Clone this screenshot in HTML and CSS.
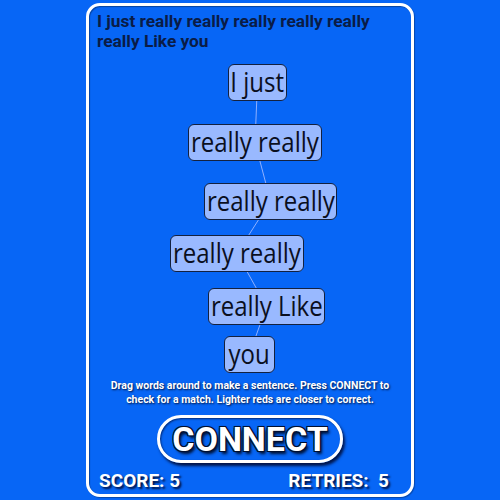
FILE: index.html
```html
<!DOCTYPE html>
<html>
<head>
<meta charset="utf-8">
<link rel="stylesheet" href="styles.css">
</head>
<body>
<div class="card">
  <div class="title">I just really really really really really really Like you</div>
  <div class="canvas">
    <svg class="links" width="322" height="325" viewBox="0 0 322 325">
      <polyline points="168.5,30.5 166,90.5 181.5,149 148,201.5 177.5,254.5 160.5,302" fill="none" stroke="#8fb0ff" stroke-width="1"/>
    </svg>
    <div class="word" style="left:139px;top:12px;width:59px"><span>I just</span></div>
    <div class="word" style="left:99px;top:72px;width:134px"><span>really really</span></div>
    <div class="word" style="left:115px;top:131px;width:133px"><span>really really</span></div>
    <div class="word" style="left:81px;top:183px;width:134px"><span>really really</span></div>
    <div class="word" style="left:119px;top:236px;width:117px"><span>really Like</span></div>
    <div class="word" style="left:135px;top:284px;width:51px"><span>you</span></div>
  </div>
  <div class="help">Drag words around to make a sentence. Press CONNECT to check for a match. Lighter reds are closer to correct.</div>
  <div class="btnrow"><div class="connect">CONNECT</div></div>
  <div class="stats"><span>SCORE: 5</span><span>RETRIES:&nbsp; 5</span></div>
</div>
</body>
</html>
```
FILE: styles.css
```css
html, body {
  margin: 0;
  padding: 0;
  background: #0766f6;
  width: 500px;
  height: 500px;
  overflow: hidden;
}
.card {
  box-sizing: border-box;
  margin: 3px 0 0 86px;
  width: 328px;
  height: 494px;
  border: 3px solid #ffffff;
  border-radius: 14px;
  box-shadow: inset 1px 1px 1px rgba(0,0,0,0.35), 1px 1px 1px rgba(0,0,0,0.3);
  display: flex;
  flex-direction: column;
  font-family: Roboto, "Liberation Sans", sans-serif;
}
.title {
  padding: 5px 8px 0 8px;
  height: 41px;
  font-size: 17.3px;
  line-height: 20px;
  font-weight: bold;
  color: #0a1c46;
}
.canvas {
  position: relative;
  height: 325px;
}
.links {
  position: absolute;
  left: 0;
  top: 0;
}
.word {
  position: absolute;
  box-sizing: border-box;
  height: 37px;
  background: #99b9ff;
  border: 1.5px solid #13213f;
  border-radius: 6px;
  font-family: "Open Sans", sans-serif;
  font-size: 27px;
  line-height: 33px;
  color: #0a0f1e;
  text-align: center;
  white-space: nowrap;
  display: flex;
  justify-content: center;
}
.word span {
  display: inline-block;
  transform: scaleX(0.89);
}
.help {
  margin-top: 2px;
  padding: 0 10px;
  text-align: center;
  color: #ffffff;
  font-size: 10.5px;
  line-height: 14px;
  font-weight: bold;
  text-shadow: 1px 1px 2px rgba(0,0,20,0.8);
}
.btnrow {
  display: flex;
  justify-content: center;
  margin-top: 8px;
}
.connect {
  box-sizing: border-box;
  width: 186px;
  height: 48px;
  border: 3px solid #ffffff;
  border-radius: 24px;
  box-shadow: 2px 3px 3px rgba(0,0,30,0.8), inset 1px 1px 2px rgba(0,0,30,0.6);
  color: #ffffff;
  font-size: 34px;
  font-weight: bold;
  line-height: 42px;
  text-align: center;
  text-shadow: 0 0 2px #001030, 1px 1px 0 #001030, -1px -1px 0 #001030, 1px -1px 0 #001030, -1px 1px 0 #001030, 2px 3px 3px #001030;
}
.stats {
  display: flex;
  justify-content: space-between;
  padding: 0 22px 0 10px;
  margin-top: 6px;
  color: #ffffff;
  font-size: 19px;
  font-weight: bold;
  line-height: 24px;
  text-shadow: 2px 2px 2px rgba(0,0,30,0.8);
}
```
